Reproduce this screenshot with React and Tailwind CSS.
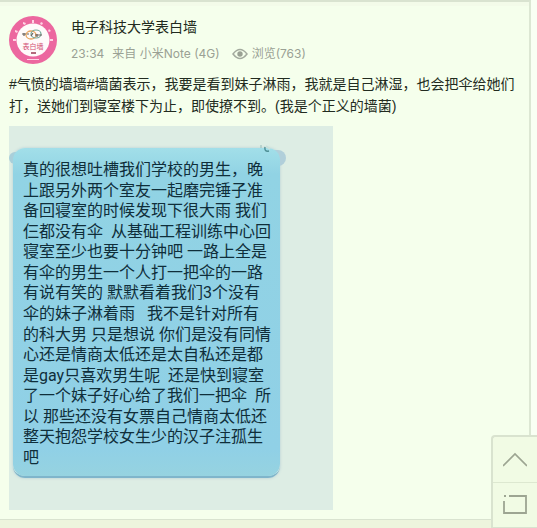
import React from "react";

const letterLines = [
  "真的很想吐槽我们学校的男生，晚",
  "上跟另外两个室友一起磨完锤子准",
  "备回寝室的时候发现下很大雨 我们",
  "仨都没有伞  从基础工程训练中心回",
  "寝室至少也要十分钟吧 一路上全是",
  "有伞的男生一个人打一把伞的一路",
  "有说有笑的 默默看着我们3个没有",
  "伞的妹子淋着雨   我不是针对所有",
  "的科大男 只是想说 你们是没有同情",
  "心还是情商太低还是太自私还是都",
  "是gay只喜欢男生呢  还是快到寝室",
  "了一个妹子好心给了我们一把伞  所",
  "以 那些还没有女票自己情商太低还",
  "整天抱怨学校女生少的汉子注孤生",
  "吧",
];

function Avatar() {
  return (
    <svg className="size-12 shrink-0" viewBox="0 0 48 48" role="img" aria-label="表白墙">
      <circle cx="24" cy="24" r="24" fill="#ec679f" />
      <circle cx="24" cy="24" r="16.5" fill="#fffafa" />
      <g fill="#ffd3e4">
        <path d="M4 23h3v2H4zM6 14l3 1-1 2-2-1zM14 6l3 1-1 2-2-1zM23 4h2v3h-2zM32 6l2 1-1 2-2-1zM40 13l2 2-2 1-1-1zM41 23h3v2h-3z" />
        <path d="M18 43h12v1H18z" />
      </g>
      <g fill="none">
        <ellipse cx="22" cy="19" rx="5" ry="4" stroke="#e9a45c" strokeWidth="1.3" />
        <ellipse cx="27" cy="18" rx="5" ry="4" stroke="#75a796" strokeWidth="1.2" />
        <path d="M13 18h4m-2-1v3m3-2h2m2 2 2-3m2 2h5m-3-1v3m3-2h2" stroke="#6b625c" strokeWidth="1.2" />
      </g>
      <text x="24" y="33" textAnchor="middle" fontSize="7" fill="#d34f73" fontFamily="Noto Sans CJK SC, sans-serif">
        表白墙
      </text>
      <path d="M22 37h5" stroke="#9b3850" strokeWidth="1.5" />
    </svg>
  );
}

function Eye() {
  return (
    <svg className="h-3 w-4" viewBox="0 0 16 12" fill="none" aria-hidden="true">
      <path d="M1 6Q4.5 1.5 8 1.5T15 6Q11.5 10.5 8 10.5T1 6Z" stroke="#a3aa9e" strokeWidth="1.5" />
      <circle cx="8" cy="6" r="2.7" fill="#9aa194" />
    </svg>
  );
}

function Letter() {
  return (
    <div className="mt-[9px] w-[324px] max-w-full bg-[#ddede4] px-1 pt-[22px] pb-8">
      <div className="relative w-[267px] max-w-full rounded-xl border-b-2 border-[#7fb5cb] px-2.5 pt-3 pb-2 shadow-[0_0_3px_#b4ccd5]">
        <div className="absolute -right-1.5 top-0.5 h-4 w-5 rounded-full bg-[#b1cfda]" />
        <div className="absolute -left-1 top-1 h-3 w-4 rounded-full bg-[#a9cfda]" />
        <div className="absolute inset-0 rounded-xl bg-[linear-gradient(180deg,#a2dfe9_0%,#91d3e4_8%,#90d0e6_92%,#96d3e0_100%)]" />
        <svg className="absolute -top-1 right-2 h-3 w-3" viewBox="0 0 12 12" fill="none" aria-hidden="true">
          <path d="M1 1v3" stroke="#9abdb9" />
          <path d="M5 3q-1 5 4 4" stroke="#4f8f95" strokeWidth="1.5" />
          <path d="M6 2l4 3" stroke="#cbe0da" strokeWidth="2" />
        </svg>
        <p className="relative flex h-[308px] flex-col justify-between whitespace-pre font-['Roboto','Noto_Sans_CJK_SC',sans-serif] text-base leading-5 text-[#0f2e3a]">
          {letterLines.map((line) => (
            <span key={line}>{line}</span>
          ))}
        </p>
      </div>
    </div>
  );
}

export default function App() {
  return (
    <div className="flex min-h-screen flex-col bg-[#edf5dd] font-['Liberation_Sans','Noto_Sans_CJK_SC',sans-serif]">
      <div className="bg-[#f9fff3] pr-1.5">
        <article className="border-t-2 border-r-2 border-b border-t-[#d9e3d0] border-r-[#dce7d3] border-b-[#d9e3d0] bg-[#f5ffec] pr-3 pb-[9px] pl-[9px] shadow-[inset_0_4px_0_#f3fbe9]">
          <header className="flex gap-3.5 pt-3.5">
            <Avatar />
            <div>
              <h1 className="text-sm leading-[22px] text-[#222b20]">电子科技大学表白墙</h1>
              <p className="mt-1.5 flex items-center font-['Inter','Noto_Sans_CJK_SC',sans-serif] text-xs leading-5 text-[#9aa194]">
                <time>23:34</time>
                <span className="ml-2">来自 小米Note (4G)</span>
                <span className="ml-3 flex items-center gap-1">
                  <Eye />
                  浏览(763)
                </span>
              </p>
            </div>
          </header>
          <p className="mt-[9px] text-sm leading-[22px] text-[#222b20]">
            #气愤的墙墙#墙菌表示，我要是看到妹子淋雨，我就是自己淋湿，也会把伞给她们打，送她们到寝室楼下为止，即使撩不到。(我是个正义的墙菌)
          </p>
          <Letter />
        </article>
      </div>
      <nav className="fixed right-0 bottom-0 flex w-[46px] flex-col rounded-tl border-t-2 border-l-2 border-b border-[#d9e3cf] bg-[#f1fbe4] text-[#9da592]">
        <button type="button" aria-label="返回顶部" className="flex h-[46px] items-center justify-center border-b border-[#dde8d0]">
          <svg className="h-4 w-6" viewBox="0 0 24 16" fill="none" stroke="currentColor" strokeWidth="1.7">
            <path d="M0 14 12 2l12 12" />
          </svg>
        </button>
        <button type="button" aria-label="消息" className="flex h-11 items-center justify-center">
          <svg className="h-5 w-6" viewBox="0 0 24 20" fill="none" stroke="currentColor" strokeWidth="1.8">
            <path d="M6 1h17v17H1V6M1 1h2" />
          </svg>
        </button>
      </nav>
    </div>
  );
}
